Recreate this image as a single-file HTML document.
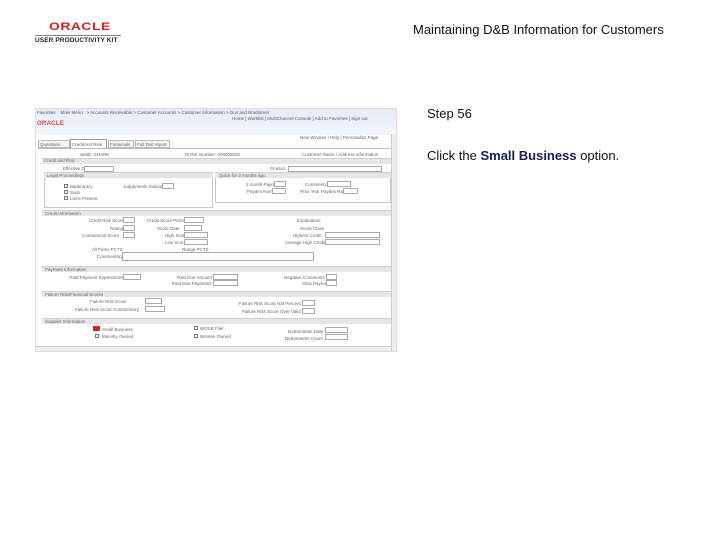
<!DOCTYPE html>
<html><head><meta charset="utf-8"><style>
*{margin:0;padding:0;box-sizing:border-box}
body{width:720px;height:540px;background:#fff;position:relative;overflow:hidden;font-family:"Liberation Sans",sans-serif}
.a{position:absolute}
.t{position:absolute;font-size:4.5px;color:#666;white-space:nowrap;line-height:5px}
.sec{position:absolute;left:42px;width:349px;height:6px;background:#e6e6e6;border-top:1px solid #d0d0d0}
.box{position:absolute;border:1px solid #c8c8c8;background:#fff}
.in{position:absolute;height:6px;border:1px solid #aaa;background:#fff}
.cb{position:absolute;width:4px;height:4px;border:1px solid #777;background:#fff}
</style></head><body>
<!-- logo -->
<div class="a" style="left:49px;top:21px;font:bold 11px 'Liberation Sans',sans-serif;color:#d21f1f;letter-spacing:0.5px;transform:scaleX(1.25);transform-origin:left">ORACLE</div>
<div class="a" style="left:35px;top:35px;width:86px;height:1px;background:#888"></div>
<div class="a" style="left:35px;top:37px;font:bold 6.5px 'Liberation Sans',sans-serif;color:#222;white-space:nowrap;letter-spacing:0.1px">USER PRODUCTIVITY KIT</div>

<div class="a" style="left:413px;top:22px;font-size:13px;color:#111;white-space:nowrap">Maintaining D&amp;B Information for Customers</div>
<div class="a" style="left:427px;top:106px;font-size:13px;color:#111">Step 56</div>
<div class="a" style="left:427px;top:148px;font-size:13px;color:#111;white-space:nowrap">Click the <b style="color:#1a1a5a">Small Business</b> option.</div>

<!-- screenshot -->
<div class="a" style="left:35px;top:108px;width:362px;height:244px;background:#fff;overflow:hidden">
 <div class="a" style="left:0;top:0;width:362px;height:27px;background:linear-gradient(#e3ecf6,#f2f6fb)"></div>
 <div class="t" style="left:2px;top:2px;color:#557">Favorites &nbsp;&nbsp; Main Menu &nbsp; &gt; Accounts Receivable &gt; Customer Accounts &gt; Customer Information &gt; Dun and Bradstreet</div>
 <div class="t" style="left:197px;top:8px;color:#557">Home | Worklist | MultiChannel Console | Add to Favorites | Sign out</div>
 <div class="a" style="left:2px;top:13px;font:bold 6px 'Liberation Sans',sans-serif;color:#d44;letter-spacing:0.3px">ORACLE</div>
 <div class="t" style="left:265px;top:27px">New Window | Help | Personalize Page</div>
 <!-- tabs -->
 <div class="a" style="left:3px;top:32px;width:32px;height:8px;border:1px solid #bbb;background:#f4f4f4"></div><div class="t" style="left:5px;top:34px">Questions</div>
 <div class="a" style="left:35px;top:31px;width:37px;height:9px;border:1px solid #999;border-bottom:none;background:#fff"></div><div class="t" style="left:37px;top:34px">CreditAnd Risk</div>
 <div class="a" style="left:73px;top:32px;width:26px;height:8px;border:1px solid #bbb;background:#f4f4f4"></div><div class="t" style="left:75px;top:34px">Financials</div>
 <div class="a" style="left:100px;top:32px;width:35px;height:8px;border:1px solid #bbb;background:#f4f4f4"></div><div class="t" style="left:102px;top:34px">Full Text report</div>
 <div class="a" style="left:3px;top:40px;width:352px;height:1px;background:#bbb"></div>
 <div class="t" style="left:45px;top:44px">SetID: SHARE</div>
 <div class="t" style="left:150px;top:44px">DUNS Number: 000005520</div>
 <div class="t" style="left:267px;top:44px">Customer Name / Address information</div>
 <!-- scrollbar -->
 <div class="a" style="left:356px;top:26px;width:6px;height:218px;background:#eee;border-left:1px solid #ccc"></div>
 <div class="a" style="left:0;top:238px;width:356px;height:6px;background:#eee;border-top:1px solid #ccc"></div>
</div>
<div class="sec" style="top:158px"></div><div class="t" style="left:44px;top:158px">Credit and Risk</div>
<div class="t" style="left:63px;top:166px">Effective Date</div><div class="in" style="left:84px;top:166px;width:30px"></div>
<div class="t" style="left:270px;top:166px">Product</div><div class="in" style="left:288px;top:166px;width:94px"></div>
<div class="box" style="left:44px;top:172px;width:169px;height:36px"></div>
<div class="sec" style="left:44px;width:169px;top:172px"></div><div class="t" style="left:47px;top:173px">Legal Proceedings</div>
<div class="cb" style="left:64px;top:184px"></div><div class="t" style="left:70px;top:184px">Bankruptcy</div>
<div class="cb" style="left:64px;top:190px"></div><div class="t" style="left:70px;top:190px">Suits</div>
<div class="cb" style="left:64px;top:196px"></div><div class="t" style="left:70px;top:196px">Liens Present</div>
<div class="t" style="left:123px;top:184px">Judgements Indicator</div><div class="in" style="left:162px;top:183px;width:12px"></div>
<div class="box" style="left:215px;top:172px;width:176px;height:31px"></div>
<div class="sec" style="left:215px;width:176px;top:172px"></div><div class="t" style="left:219px;top:173px">Quick for 3 months ago</div>
<div class="t" style="left:246px;top:182px">3 month Paydex</div><div class="in" style="left:274px;top:181px;width:12px"></div>
<div class="t" style="left:305px;top:182px">Comments</div><div class="in" style="left:327px;top:181px;width:24px"></div>
<div class="t" style="left:247px;top:189px">Paydex Norm</div><div class="in" style="left:272px;top:188px;width:14px"></div>
<div class="t" style="left:300px;top:189px">Prior Year Paydex Rating</div><div class="in" style="left:343px;top:188px;width:15px"></div>
<div class="sec" style="top:210px"></div><div class="t" style="left:45px;top:211px">Credit Information</div>
<div class="t" style="left:89px;top:218px">Credit Risk Score</div><div class="in" style="left:123px;top:217px;width:12px"></div>
<div class="t" style="left:147px;top:218px">Credit Score Percent</div><div class="in" style="left:184px;top:217px;width:20px"></div>
<div class="t" style="left:297px;top:218px">Explanation</div>
<div class="t" style="left:110px;top:226px">Rating</div><div class="in" style="left:123px;top:225px;width:12px"></div>
<div class="t" style="left:157px;top:226px">Score Date</div><div class="in" style="left:184px;top:225px;width:18px"></div>
<div class="t" style="left:300px;top:226px">Score Class</div>
<div class="t" style="left:82px;top:233px">Commercial Score</div><div class="in" style="left:123px;top:232px;width:12px"></div>
<div class="t" style="left:165px;top:233px">High Score</div><div class="in" style="left:184px;top:232px;width:24px"></div>
<div class="t" style="left:293px;top:233px">Highest Credit</div><div class="in" style="left:325px;top:232px;width:55px"></div>
<div class="t" style="left:165px;top:240px">Low Score</div><div class="in" style="left:184px;top:239px;width:24px"></div>
<div class="t" style="left:285px;top:240px">Average High Credit</div><div class="in" style="left:325px;top:239px;width:55px"></div>
<div class="t" style="left:92px;top:247px">All Firms PCTS</div><div class="t" style="left:182px;top:247px">Range PCTS</div>
<div class="t" style="left:97px;top:254px">Commentary</div><div class="in" style="left:122px;top:252px;width:192px;height:9px"></div>
<div class="sec" style="top:266px"></div><div class="t" style="left:45px;top:267px">Payment Information</div>
<div class="t" style="left:69px;top:275px">Total Payment Experiences</div><div class="in" style="left:123px;top:274px;width:18px"></div>
<div class="t" style="left:177px;top:275px">Past Due Amount</div><div class="in" style="left:213px;top:274px;width:25px"></div>
<div class="t" style="left:284px;top:275px">Negative Comments</div><div class="in" style="left:326px;top:274px;width:11px"></div>
<div class="t" style="left:172px;top:281px">Past Due Payments</div><div class="in" style="left:213px;top:280px;width:25px"></div>
<div class="t" style="left:302px;top:281px">Slow Payments</div><div class="in" style="left:326px;top:280px;width:11px"></div>
<div class="sec" style="top:291px"></div><div class="t" style="left:45px;top:292px">Failure Risk/Financial Scores</div>
<div class="t" style="left:90px;top:299px">Failure Risk Score</div><div class="in" style="left:145px;top:298px;width:17px"></div>
<div class="t" style="left:239px;top:301px">Failure Risk Score Nat Percent</div><div class="in" style="left:302px;top:300px;width:13px"></div>
<div class="t" style="left:75px;top:307px">Failure Risk Score Commentary</div><div class="in" style="left:145px;top:306px;width:20px"></div>
<div class="t" style="left:242px;top:309px">Failure Risk Score Over Valid</div><div class="in" style="left:302px;top:308px;width:13px"></div>
<div class="sec" style="top:318px"></div><div class="t" style="left:45px;top:319px">Supplier Information</div>
<div class="a" style="left:93px;top:326px;width:7px;height:5px;background:#d22"></div><div class="t" style="left:102px;top:327px">Small Business</div>
<div class="cb" style="left:95px;top:334px"></div><div class="t" style="left:102px;top:334px">Minority Owned</div>
<div class="cb" style="left:194px;top:326px"></div><div class="t" style="left:200px;top:326px">WOSB Filer</div>
<div class="cb" style="left:194px;top:334px"></div><div class="t" style="left:200px;top:334px">Women Owned</div>
<div class="t" style="left:288px;top:329px">Debarments Date</div><div class="in" style="left:325px;top:327px;width:23px"></div>
<div class="t" style="left:285px;top:336px">Debarments Count</div><div class="in" style="left:325px;top:334px;width:23px"></div>
<div class="a" style="left:35px;top:108px;width:362px;height:244px;border:1px solid #ddd"></div>
</body></html>
